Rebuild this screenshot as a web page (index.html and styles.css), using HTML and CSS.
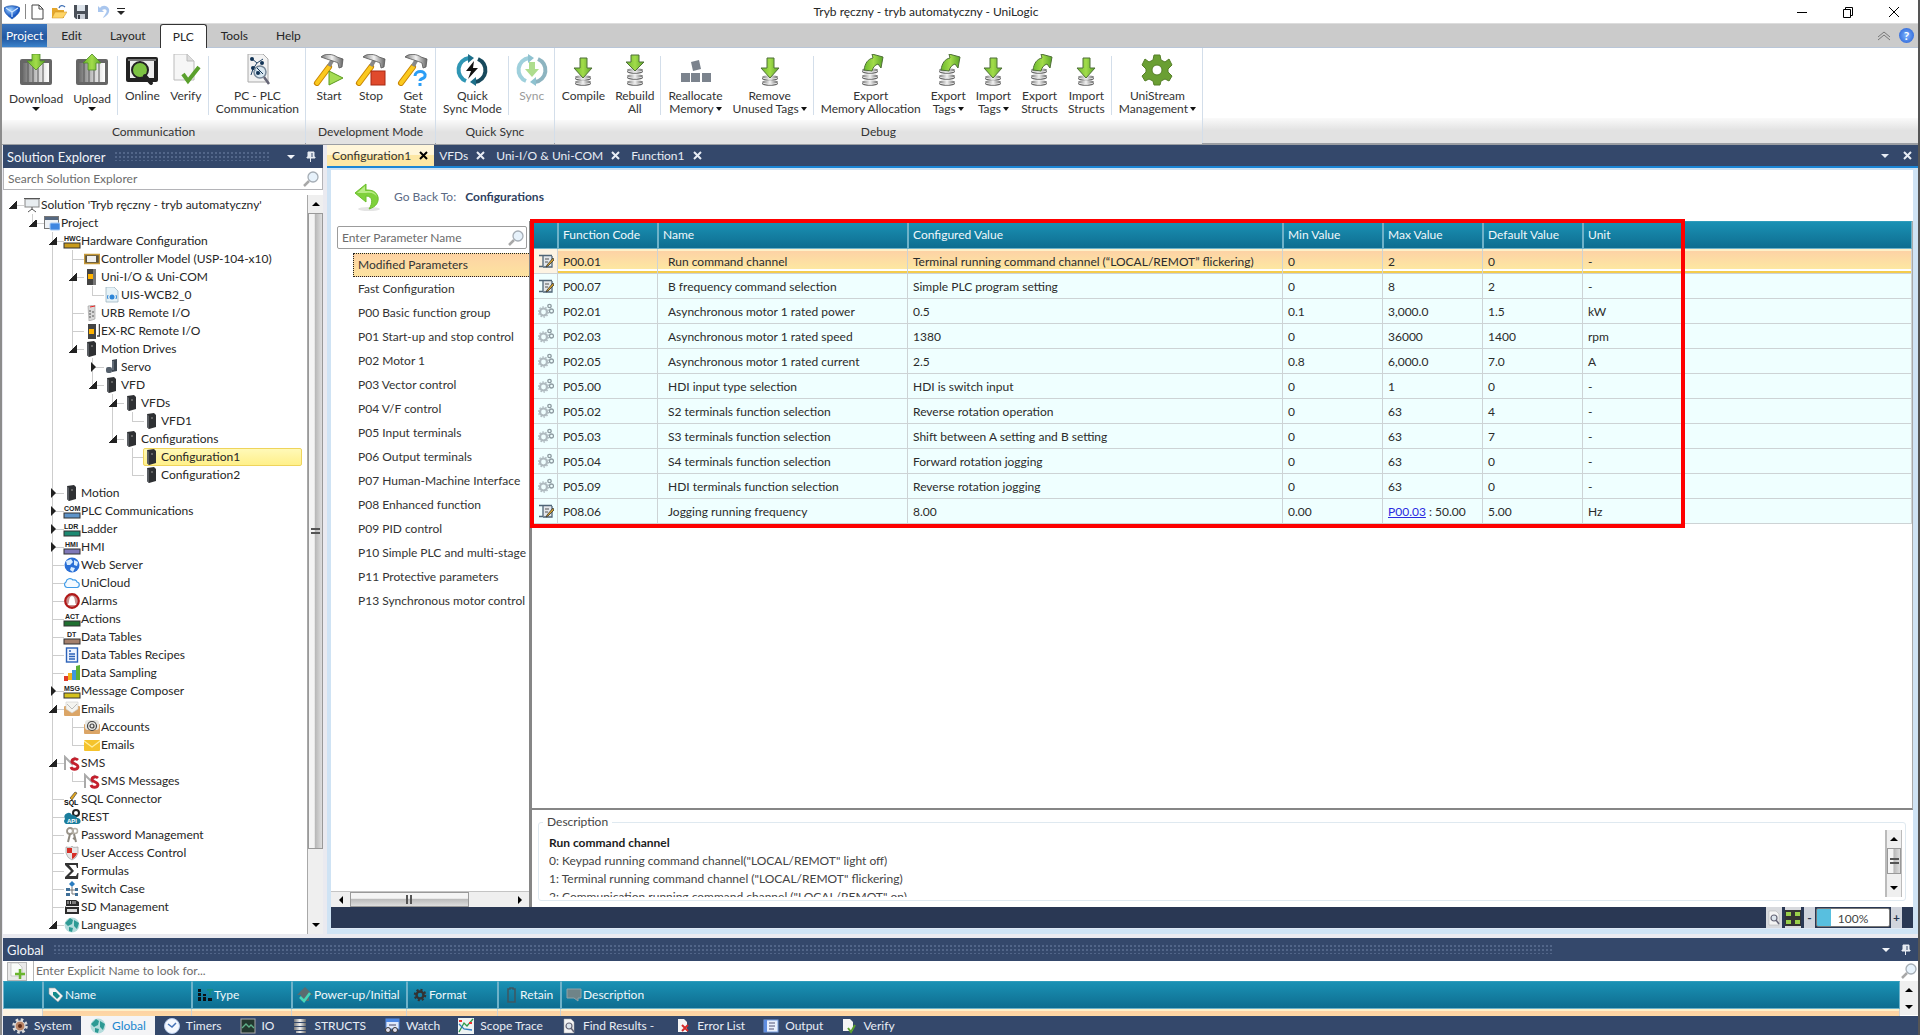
FILE: index.html
```html
<!DOCTYPE html>
<html lang="en">
<head>
<meta charset="utf-8">
<title>Tryb ręczny - tryb automatyczny - UniLogic</title>
<link rel="stylesheet" href="styles.css">
</head>
<body>
<svg class="defs" aria-hidden="true">
<defs>
<linearGradient id="gGreen" x1="0" y1="0" x2="1" y2="0"><stop offset="0" stop-color="#6cb92d"/><stop offset=".5" stop-color="#a2dc4a"/><stop offset="1" stop-color="#5ba628"/></linearGradient>
<linearGradient id="gSteel" x1="0" y1="0" x2="1" y2="0"><stop offset="0" stop-color="#777"/><stop offset=".5" stop-color="#f2f2f2"/><stop offset="1" stop-color="#666"/></linearGradient>
<linearGradient id="gBar" x1="0" y1="0" x2="1" y2="0"><stop offset="0" stop-color="#6d6d6d"/><stop offset=".6" stop-color="#d5d5d5"/><stop offset="1" stop-color="#fff"/></linearGradient>
<radialGradient id="gBlue" cx=".4" cy=".3"><stop offset="0" stop-color="#9cd0ff"/><stop offset="1" stop-color="#1756c4"/></radialGradient>
</defs>
<symbol id="logo" viewBox="0 0 16 16"><path d="M0 4C4 1 12 1 16 4C16 9 12 12 8 15C4 12 0 9 0 4Z" fill="url(#gBlue)" stroke="#1b55a8" stroke-width=".7"/><path d="M2 4L8 8L14 4M8 8V13" stroke="#cfe6ff" fill="none" stroke-width="1.2"/></symbol>
<symbol id="new" viewBox="0 0 16 16"><path d="M3 1H10L14 5V15H3Z" fill="#fff" stroke="#444"/><path d="M10 1V5H14" fill="none" stroke="#444"/></symbol>
<symbol id="open" viewBox="0 0 16 16"><path d="M1 14V4H6L7 6H13V14Z" fill="#e5a72b"/><path d="M1 14L4 8H16L12 14Z" fill="#ffd566" stroke="#c98d1e" stroke-width=".5"/><path d="M8 4C9 1 12 1 14 3" fill="none" stroke="#3d6fb5" stroke-width="1.3"/></symbol>
<symbol id="save" viewBox="0 0 16 16"><path d="M1 1H15V15H3L1 13Z" fill="#4a5058"/><rect x="4" y="1" width="8" height="6" fill="#dce3ea"/><rect x="4" y="10" width="8" height="5" fill="#c9ced6"/><rect x="5" y="11" width="2" height="4" fill="#3b4048"/></symbol>
<symbol id="undo" viewBox="0 0 16 16"><path d="M3 2V8H9L7 6C10 4 13 6 11 9C10 11 8 13 8 14C12 12 15 9 14 5C12 1 7 1 5 4Z" fill="#a9c6ee"/></symbol>
<symbol id="slots" viewBox="0 0 32 32"><rect x="0" y="5" width="32" height="26" rx="2" fill="#666"/><rect x="3" y="9" width="26" height="19" fill="url(#gBar)"/><path d="M8 9V28M13 9V28M18 9V28M23 9V28" stroke="#555" stroke-width="1"/></symbol>
<symbol id="download" viewBox="0 0 32 32"><use href="#slots"/><path d="M12 0H20V7H25L16 16L7 7H12Z" fill="url(#gGreen)" stroke="#4f8a28" stroke-width=".8"/></symbol>
<symbol id="upload" viewBox="0 0 32 32"><use href="#slots"/><path d="M12 16H20V9H25L16 0L7 9H12Z" fill="url(#gGreen)" stroke="#4f8a28" stroke-width=".8"/></symbol>
<symbol id="online" viewBox="0 0 32 32"><rect x="0" y="3" width="32" height="25" rx="2" fill="#222"/><rect x="4" y="7" width="24" height="17" fill="#eee"/><rect x="2" y="5" width="28" height="2" fill="#777"/><circle cx="14" cy="16" r="8" fill="#7cc242" stroke="#222" stroke-width="2"/><path d="M19 22L25 29" stroke="#222" stroke-width="4" stroke-linecap="round"/></symbol>
<symbol id="verify" viewBox="0 0 32 32"><path d="M4 0H17L24 7V26H4Z" fill="#f6f6f6" stroke="#bbb"/><path d="M17 0V7H24" fill="#ddd" stroke="#bbb"/><path d="M13 20L18 27L29 13" fill="none" stroke="#5aa02c" stroke-width="4"/></symbol>
<symbol id="pcplc" viewBox="0 0 32 32"><path d="M7 0H22L27 5V28H7Z" fill="#f2f2f2" stroke="#aaa"/><path d="M10 4L16 9L22 5M16 9L12 15L20 20M12 15L10 21" stroke="#246" fill="none"/><circle cx="11" cy="5" r="2" fill="#135"/><circle cx="12" cy="14" r="2" fill="#135"/><circle cx="21" cy="9" r="2" fill="#135"/><circle cx="19" cy="18" r="6" fill="#cfe3f0" fill-opacity=".7" stroke="#789" stroke-width="1.5"/><path d="M16 14L22 20" stroke="#135"/><circle cx="17" cy="19" r="2" fill="#135"/><path d="M23 23L28 30" stroke="#667" stroke-width="2.5"/></symbol>
<symbol id="hammer" viewBox="0 0 32 32"><path d="M16 13L4 29" stroke="#c98500" stroke-width="6" stroke-linecap="round"/><path d="M16 13L4 29" stroke="#fbc91e" stroke-width="4" stroke-linecap="round"/><path d="M20 5L16 12" stroke="#888" stroke-width="4"/><path d="M8 3C12 -1 20 0 24 3L30 5L29 13L26 14L25 9C21 7 16 6 8 3Z" fill="url(#gSteel)" stroke="#555" stroke-width=".8"/></symbol>
<symbol id="start" viewBox="0 0 32 32"><use href="#hammer"/><path d="M16 17L30 24L16 31Z" fill="#a5dc54" stroke="#5b9a1d"/></symbol>
<symbol id="stop" viewBox="0 0 32 32"><use href="#hammer"/><rect x="16" y="17" width="14" height="14" fill="#e04a2c" stroke="#a82812"/></symbol>
<symbol id="getstate" viewBox="0 0 32 32"><use href="#hammer"/><path d="M18 22C18 16 29 16 28 22C28 25 23 24 23 27M23 29V32" stroke="#2b9df5" stroke-width="3" fill="none"/></symbol>
<symbol id="qsync" viewBox="0 0 32 32"><path d="M13 4A12 12 0 0 0 10 27" fill="none" stroke="#2f96b4" stroke-width="4"/><path d="M19 28A12 12 0 0 0 22 5" fill="none" stroke="#17495c" stroke-width="4"/><path d="M12 0L18 4L12 9ZM20 32L14 28L20 23Z" fill="#1d6f8a"/><path d="M18 7L10 17H15L12 25L22 14H17Z" fill="#111"/></symbol>
<symbol id="sync" viewBox="0 0 32 32"><path d="M13 4A12 12 0 0 0 10 27" fill="none" stroke="#9fd0dc" stroke-width="4"/><path d="M19 28A12 12 0 0 0 22 5" fill="none" stroke="#8db4c0" stroke-width="4"/><path d="M12 0L18 4L12 9ZM20 32L14 28L20 23Z" fill="#8fc2d0"/><path d="M13 8H19V15H23L16 23L9 15H13Z" fill="#aedd8e"/></symbol>
<symbol id="disk" viewBox="0 0 18 6"><path d="M0 2C0 6 18 6 18 2V3.500C18 7 0 7 0 3.500Z" fill="#666"/><ellipse cx="9" cy="2" rx="9" ry="2" fill="url(#gSteel)"/></symbol>
<symbol id="compile" viewBox="0 0 32 32"><use href="#disk" x="8" y="21" width="16" height="6"/><use href="#disk" x="8" y="26" width="16" height="6"/><path d="M13 4H20V14H25L16 24L7 14H13Z" fill="url(#gGreen)" stroke="#4f6f38"/></symbol>
<symbol id="rebuild" viewBox="0 0 32 32"><use href="#disk" x="8" y="14" width="16" height="6"/><use href="#disk" x="8" y="20" width="16" height="6"/><use href="#disk" x="8" y="26" width="16" height="6"/><path d="M12 1H20V8H25L16 17L7 8H12Z" fill="url(#gGreen)" stroke="#4f6f38"/></symbol>
<symbol id="export" viewBox="0 0 32 32"><use href="#disk" x="7" y="14" width="16" height="6"/><use href="#disk" x="7" y="20" width="16" height="6"/><use href="#disk" x="7" y="26" width="16" height="6"/><path d="M9 16C10 9 13 5 18 4L17 0L28 3L26 14L23 10C20 11 18 13 17 17Z" fill="url(#gGreen)" stroke="#4f6f38"/></symbol>
<symbol id="blocks" viewBox="0 0 32 32"><path d="M11 8L19 6L21 15L13 17ZM1 19H10V28H1ZM11 19H20V28H11ZM22 19H31V28H22Z" fill="#7b838d"/></symbol>
<symbol id="cog" viewBox="0 0 32 32"><path fill-rule="evenodd" d="M13 1H19L20 6L24 8L28 5L31 11L27 15V18L31 22L28 27L24 25L20 27L19 31H13L12 27L8 25L4 27L1 22L5 18V15L1 11L4 5L8 8L12 6ZM16 11A5 5 0 1 0 16 21A5 5 0 1 0 16 11Z" fill="#6a9f33" stroke="#557f28"/></symbol>
<symbol id="mag" viewBox="0 0 16 16"><path d="M6 10L1 15" stroke="#a8a8a8" stroke-width="2.500"/><circle cx="10" cy="6" r="5" fill="#e7f2fb" stroke="#a5adb5" stroke-width="1.300"/></symbol>
<symbol id="pin" viewBox="0 0 12 12"><path d="M3 1H9V6H10V7H2V6H3ZM5.500 7V11" fill="#e6ebf2" stroke="#e6ebf2"/><path d="M7 2V6" stroke="#34486b"/></symbol>
<symbol id="screen" viewBox="0 0 16 16"><rect x="1" y="2" width="14" height="8" fill="#e8edf0" stroke="#888"/><path d="M0 1.500H16M8 10V13M4 15L8 12L12 15" stroke="#555" fill="none"/></symbol>
<symbol id="win" viewBox="0 0 16 16"><rect x=".5" y="1.500" width="14" height="12" fill="#eef2f6" stroke="#777"/><rect x="1" y="2" width="13" height="3" fill="#556880"/><rect x="6" y="8" width="10" height="7" rx="1" fill="#3f86e0" stroke="#a9cbf5"/></symbol>
<symbol id="ctrl" viewBox="0 0 16 16"><rect x=".5" y="3.500" width="15" height="9" fill="#5b5340" stroke="#c79a3a" stroke-width="1.500"/><rect x="3" y="5" width="9" height="6" fill="#efefef"/></symbol>
<symbol id="mod" viewBox="0 0 16 16"><path d="M3 0H12V16H3Z" fill="#444"/><path d="M9 0H12V16H9Z" fill="#777"/><rect x="4" y="5" width="5" height="5" fill="#ffb300"/></symbol>
<symbol id="modx" viewBox="0 0 16 16"><path d="M4 1H12V16H4Z" fill="#444"/><rect x="5" y="6" width="5" height="5" fill="#ffb300"/><path d="M15.500 1V13H13" fill="none" stroke="#444" stroke-width="1.500"/></symbol>
<symbol id="doc" viewBox="0 0 16 16"><path d="M2 0H10L14 4V15H2Z" fill="#e6f2f7" stroke="#9fb5c0" stroke-width=".8"/><path d="M4 8Q3 10 4 12M12 8Q13 10 12 12" fill="none" stroke="#2e86d8"/><circle cx="8" cy="10" r="2.500" fill="#2e86d8"/></symbol>
<symbol id="urb" viewBox="0 0 16 16"><path d="M4 1L11 0V14L5 16Z" fill="#d9d9d9" stroke="#999" stroke-width=".6"/><path d="M6 2L11 1" stroke="#e22"/><path d="M6 5V14M9 6V8M9 10V13" stroke="#555" stroke-dasharray="2 1"/></symbol>
<symbol id="vfd" viewBox="0 0 16 16"><path d="M3 1L10 0L12 2V14L5 16L3 14Z" fill="#2e3033"/><path d="M3 1L5 3V16L3 14Z" fill="#5a5e63"/><circle cx="8" cy="5" r="1" fill="#777"/></symbol>
<symbol id="servo" viewBox="0 0 16 16"><path d="M8 1L13 0V12L8 13Z" fill="#3c4550"/><rect x="2" y="8" width="6" height="6" rx="2" fill="#55606c"/><path d="M9 2V11" stroke="#8a95a0"/></symbol>
<symbol id="globe" viewBox="0 0 16 16"><circle cx="8" cy="8" r="7.500" fill="#2a6fd6"/><path d="M2 4L7 2L9 5L6 8L3 8ZM10 3L14 5L13 9L10 8ZM7 10L11 11L9 15L6 13Z" fill="#d8ecff"/></symbol>
<symbol id="cloud" viewBox="0 0 16 16"><path d="M3 12.500A3 3 0 0 1 2 7A4 4 0 0 1 9 5A3 3 0 0 1 13 7A2.800 2.800 0 0 1 13 12.500Z" fill="#f4faff" stroke="#3f9be8" stroke-width="1.200"/></symbol>
<symbol id="alarm" viewBox="0 0 16 16"><circle cx="8" cy="8" r="6.800" fill="#c9908f" stroke="#b01818" stroke-width="2.200"/><path d="M3.500 12C6 10 4 4 8 3C12 4 10 10 12.500 12Z" fill="#fff"/></symbol>
<symbol id="recipe" viewBox="0 0 16 16"><rect x="2.500" y="1" width="11" height="14" fill="#eef4ff" stroke="#2c62b8" stroke-width="1.400"/><path d="M5 4H7M5 7H11M5 9.500H11M5 12H11" stroke="#2c62b8" stroke-width="1.300"/></symbol>
<symbol id="chart" viewBox="0 0 16 16"><path d="M0 11H4V16H0Z" fill="#e03a28"/><path d="M4 8H8V15H4Z" fill="#f5b21c"/><path d="M8 5H12V15H8Z" fill="#3f97dd"/><path d="M12 1L16 0V15H12Z" fill="#5db035"/></symbol>
<symbol id="inbox" viewBox="0 0 16 16"><rect x="0" y="5" width="16" height="10" rx="1" fill="#dba566"/><path d="M2 1H14V8L8 12L2 8Z" fill="#f4f4f0" stroke="#ccc" stroke-width=".6"/><path d="M3 3L8 8L13 3" fill="none" stroke="#bbb"/></symbol>
<symbol id="at" viewBox="0 0 16 16"><rect x="0" y="5" width="16" height="10" rx="1" fill="#dba566"/><rect x="1" y="1" width="14" height="10" rx="3" fill="#e8e8e4"/><circle cx="8" cy="7" r="4.500" fill="none" stroke="#444" stroke-width="1.200"/><circle cx="8" cy="7" r="2" fill="none" stroke="#444" stroke-width="1.200"/></symbol>
<symbol id="mail" viewBox="0 0 16 16"><rect x="0" y="3" width="16" height="11" rx="1" fill="#f5c32c"/><path d="M0 4L8 10L16 4" fill="none" stroke="#fff0a0" stroke-width="1.200"/></symbol>
<symbol id="keys" viewBox="0 0 16 16"><circle cx="6" cy="4" r="3" fill="none" stroke="#9a948a" stroke-width="1.800"/><circle cx="11" cy="4" r="2.500" fill="none" stroke="#b5b0a5" stroke-width="1.500"/><path d="M6 7L4 15M10 7L12 15M9 11L12 13" stroke="#8f8a80" stroke-width="2"/></symbol>
<symbol id="shield" viewBox="0 0 16 16"><path d="M2 2Q8 3 8 1Q8 3 14 2V8Q13 13 8 15Q3 13 2 8Z" fill="#e6e6e6" stroke="#999" stroke-width=".7"/><path d="M3 3H8V8H3ZM8 8H13Q12 12 8 14Z" fill="#d62f26"/></symbol>
<symbol id="sigma" viewBox="0 0 16 16"><path d="M1 0H14V5H13L12 2H5L10 8L5 13H12L13.500 10H14.500L14 16H1V14L7 8L1 2Z" fill="#333"/></symbol>
<symbol id="switch" viewBox="0 0 16 16"><path d="M8 0L11 3L8 6L5 3Z" fill="#2b7cc0"/><path d="M8 6V13M8 9H12M8 13H12M4 9H8" stroke="#777"/><path d="M2 7H6V10H2ZM2 12H6V15H2ZM11 7H14V10H11ZM11 12H14V15H11Z" fill="#3f6f98"/></symbol>
<symbol id="sd" viewBox="0 0 16 16"><path d="M2 1H12L15 3V15H1V8L2 7Z" fill="#2c2c2c"/><path d="M4 2V5M6.500 2V5M9 2V5M11 2V5" stroke="#ccc"/><rect x="3" y="10" width="10" height="3" fill="#ddd"/><path d="M2 7.500H15" stroke="#eee"/></symbol>
<symbol id="globe2" viewBox="0 0 16 16"><circle cx="8" cy="8" r="7.500" fill="#b4dcdc"/><path d="M1 6L6 1L9 3L8 7L4 9ZM10 3L15 6L13 12L10 9ZM5 10L9 11L8 15L5 14Z" fill="#2d9a94"/></symbol>
<symbol id="edit" viewBox="0 0 16 16"><rect x="5" y="3" width="9" height="11" fill="#e3e7ea"/><path d="M1 2.500H14M5 3V13M1 13.500H5M14 3V14H5" fill="none" stroke="#4f6577" stroke-width="1.300"/><path d="M7 6H11M7 9H10" stroke="#555"/><path d="M15 5L9 12L8 14L10 13L16 7Z" fill="#d9a42a" stroke="#333" stroke-width=".8"/></symbol>
<symbol id="gears" viewBox="0 0 16 16"><circle cx="5.500" cy="9" r="3.500" fill="none" stroke="#aebabf" stroke-width="2.200"/><circle cx="5.500" cy="9" r="5" fill="none" stroke="#aebabf" stroke-width="1.300" stroke-dasharray="1.500 1.600"/><circle cx="11.500" cy="3" r="1.700" fill="none" stroke="#8d9ba1" stroke-width="1.300"/><circle cx="13.500" cy="8" r="2" fill="none" stroke="#8d9ba1" stroke-width="1.300"/></symbol>
<symbol id="tag" viewBox="0 0 16 16"><path d="M1 1L7 1L15 9L10 15L1 7Z" fill="#f1f4f4" stroke="#999" stroke-width=".6"/><path d="M5 5L8 5L12 9L9 12L5 8Z" fill="#128a8a"/></symbol>
<symbol id="type" viewBox="0 0 16 16"><path d="M1 2H4V5H1ZM1 6H4V9H1ZM1 10H4V14H1ZM6 7H9V9H6ZM6 10H9V14H6ZM11 11H15V14H11Z" fill="#0b1013"/><path d="M10 2H16V4H14V8H12V4H10Z" fill="#138b86"/></symbol>
<symbol id="power" viewBox="0 0 16 16"><path d="M8 0L16 8H12V14H4V8H0Z" fill="#5b6b6f"/><path d="M3 10L7 14L13 6" fill="none" stroke="#45d6b8" stroke-width="2.500"/></symbol>
<symbol id="gear" viewBox="0 0 16 16"><circle cx="8" cy="8" r="3.500" fill="none" stroke="#333" stroke-width="2.500"/><circle cx="8" cy="8" r="5" fill="none" stroke="#333" stroke-width="2.500" stroke-dasharray="2 1.900"/></symbol>
<symbol id="batt" viewBox="0 0 16 16"><path d="M5 2H7V1H10V2H12V15H5Z" fill="none" stroke="#3c5964" stroke-width="1.600"/></symbol>
<symbol id="note" viewBox="0 0 16 16"><path d="M1 2H15V11H12V14L8 11H1Z" fill="#6f8488" stroke="#8fa3a8"/></symbol>
<symbol id="sys" viewBox="0 0 16 16"><circle cx="8" cy="8" r="6.500" fill="none" stroke="#ddd" stroke-width="2.500" stroke-dasharray="2.600 2.500"/><circle cx="8" cy="8" r="5" fill="#b98465" stroke="#eee"/><circle cx="8" cy="8" r="2" fill="#5a2a18"/></symbol>
<symbol id="clock" viewBox="0 0 16 16"><circle cx="8" cy="8" r="7.500" fill="#f4f8ff" stroke="#b8ccec"/><path d="M4 6L8 9L12 5" fill="none" stroke="#4472b8" stroke-width="1.500"/></symbol>
<symbol id="io" viewBox="0 0 16 16"><rect x="1" y="1" width="14" height="14" fill="#23382f" stroke="#aaa"/><path d="M2 10L6 6L9 9L11 7L14 10" fill="none" stroke="#5fb08a" stroke-width="1.300"/></symbol>
<symbol id="db" viewBox="0 0 16 16"><path d="M2 1H14V4H2ZM2 5H14V8H2ZM2 9H14V12H2ZM4 13H14V15H4Z" fill="url(#gSteel)"/></symbol>
<symbol id="watch" viewBox="0 0 16 16"><rect x="2" y="1" width="13" height="10" fill="#dfe9fa" stroke="#5b8ee0"/><rect x="2" y="1" width="13" height="3" fill="#4c87e4"/><path d="M5 7H12" stroke="#446"/><circle cx="4" cy="12" r="2.500" fill="#dde" stroke="#333"/><circle cx="11" cy="12" r="2.500" fill="#dde" stroke="#333"/></symbol>
<symbol id="scope" viewBox="0 0 16 16"><rect width="16" height="16" fill="#eef3f3"/><path d="M1 14L6 5L9 8L15 1" fill="none" stroke="#2f9a4a" stroke-width="1.300"/><path d="M1 6L6 11L14 12" fill="none" stroke="#2f7bc0" stroke-width="1.300"/><path d="M1 3L4 3M11 5L14 5" stroke="#e33" stroke-width="2"/></symbol>
<symbol id="find" viewBox="0 0 16 16"><path d="M3 1H10L13 4V15H3Z" fill="#f4f4f4" stroke="#aaa" stroke-width=".5"/><circle cx="8" cy="8" r="3" fill="#dde6ee" stroke="#667" stroke-width="1.200"/><path d="M10 10L13 14" stroke="#667" stroke-width="1.600"/></symbol>
<symbol id="err" viewBox="0 0 16 16"><path d="M3 1H9L12 4V14H3Z" fill="#f4f4f4"/><path d="M7 7L13 13M13 7L7 13" stroke="#d42a2a" stroke-width="2"/></symbol>
<symbol id="out" viewBox="0 0 16 16"><rect x="1" y="2" width="14" height="12" fill="#e8effc" stroke="#7ba0e0"/><rect x="1" y="2" width="3" height="12" fill="#5f8de0"/><path d="M6 5H12M6 8H12M6 11H11" stroke="#557"/></symbol>
<symbol id="ver" viewBox="0 0 16 16"><path d="M2 1H9L12 4V13H2Z" fill="#f4f4f4"/><path d="M7 10L10 14L14 7" fill="none" stroke="#5aa02c" stroke-width="2"/></symbol>
<symbol id="fit" viewBox="0 0 16 16"><rect width="16" height="16" fill="#333"/><path d="M1 2H6V6H1ZM10 2H15V6H10ZM1 10H6V14H1ZM10 10H15V14H10Z" fill="#9ad04a"/></symbol>
<symbol id="addpage" viewBox="0 0 16 16"><path d="M2 0H9L13 4V13H2Z" fill="#f8fbf8" stroke="#bbb" stroke-width=".7"/><path d="M11 6V16M6 11H16" stroke="#6ab52f" stroke-width="2.500"/></symbol>
<symbol id="sms" viewBox="0 0 16 16"><path d="M1 15V2L8 9L11 2" fill="none" stroke="#aaa" stroke-width="2"/><path d="M14 5C12 3 7 4 8 7C9 9 14 9 14 12C13 15 8 15 7 12" fill="none" stroke="#c41f2c" stroke-width="2.800"/></symbol>
<symbol id="back" viewBox="0 0 28 28"><ellipse cx="15" cy="26" rx="11" ry="2" fill="#e4e4e4"/><path d="M12 1L1 10L12 19V13C19 13 19 20 15 26C22 24 25 19 24 14C22 8 18 7 12 7Z" fill="#7fd13b" stroke="#6dbf2e"/><path d="M11 3L3 10L12 10C18 9 21 11 23 14C21 8 17 8 11 8Z" fill="#b9ec86"/></symbol>
</svg>

<header class="titlebar">
  <div class="quick">
    <svg class="i16"><use href="#logo"/></svg><i class="bar"></i>
    <button aria-label="New"><svg class="i16"><use href="#new"/></svg></button>
    <button aria-label="Open"><svg class="i16"><use href="#open"/></svg></button>
    <button aria-label="Save"><svg class="i16"><use href="#save"/></svg></button>
    <button aria-label="Undo"><svg class="i16"><use href="#undo"/></svg></button>
    <button class="customize" aria-label="Customize toolbar"><i class="tri down"></i></button>
  </div>
  <h1>Tryb ręczny - tryb automatyczny - UniLogic</h1>
  <div class="winctl">
    <button aria-label="Minimize"><svg width="12" height="12"><path d="M1 6.500H11" stroke="#000"/></svg></button>
    <button aria-label="Restore"><svg width="12" height="12"><path d="M1.500 3.500H8.500V11.500H1.500ZM3.500 3V1.500H10.500V9.500H9" fill="none" stroke="#000"/></svg></button>
    <button aria-label="Close"><svg width="12" height="12"><path d="M1 1L11 11M11 1L1 11" stroke="#000"/></svg></button>
  </div>
</header>

<nav class="menu">
  <button class="file">Project</button><button>Edit</button><button>Layout</button><button class="on">PLC</button><button>Tools</button><button>Help</button>
  <span class="grow"></span>
  <button class="mini" aria-label="Collapse ribbon"><svg width="14" height="10"><path d="M1 6L7 1L13 6M1 9L7 4L13 9" fill="none" stroke="#777"/></svg></button>
  <button class="help" aria-label="Help topics">?</button>
</nav>

<section class="ribbon">
  <div class="group"><div class="tools">
    <button class="drop"><svg><use href="#download"/></svg>Download<i class="tri down"></i></button>
    <button class="drop"><svg><use href="#upload"/></svg>Upload<i class="tri down"></i></button><hr>
    <button><svg><use href="#online"/></svg>Online</button>
    <button><svg><use href="#verify"/></svg>Verify</button><hr>
    <button><svg><use href="#pcplc"/></svg>PC - PLC<br>Communication</button>
  </div><h2>Communication</h2></div>
  <div class="group"><div class="tools">
    <button><svg><use href="#start"/></svg>Start</button>
    <button><svg><use href="#stop"/></svg>Stop</button>
    <button><svg><use href="#getstate"/></svg>Get<br>State</button>
  </div><h2>Development Mode</h2></div>
  <div class="group"><div class="tools">
    <button><svg><use href="#qsync"/></svg>Quick<br>Sync Mode</button><hr>
    <button disabled><svg><use href="#sync"/></svg>Sync</button>
  </div><h2>Quick Sync</h2></div>
  <div class="group"><div class="tools">
    <button><svg><use href="#compile"/></svg>Compile</button>
    <button><svg><use href="#rebuild"/></svg>Rebuild<br>All</button><hr>
    <button><svg><use href="#blocks"/></svg>Reallocate<br><span>Memory<i class="tri down"></i></span></button>
    <button><svg><use href="#compile"/></svg>Remove<br><span>Unused Tags<i class="tri down"></i></span></button><hr>
    <button><svg><use href="#export"/></svg>Export<br>Memory Allocation</button>
    <button><svg><use href="#export"/></svg>Export<br><span>Tags<i class="tri down"></i></span></button>
    <button><svg><use href="#compile"/></svg>Import<br><span>Tags<i class="tri down"></i></span></button>
    <button><svg><use href="#export"/></svg>Export<br>Structs</button>
    <button><svg><use href="#compile"/></svg>Import<br>Structs</button><hr>
    <button><svg><use href="#cog"/></svg>UniStream<br><span>Management<i class="tri down"></i></span></button>
  </div><h2>Debug</h2></div>
  <div class="group rest"><div class="tools"></div><h2></h2></div>
</section>

<main class="work">
  <aside class="explorer">
    <header class="panel-head"><h2>Solution Explorer</h2><span class="dots"></span><i class="tri down"></i><svg class="i12"><use href="#pin"/></svg></header>
    <label class="search"><input type="text" placeholder="Search Solution Explorer" aria-label="Search Solution Explorer"><svg class="i16"><use href="#mag"/></svg></label>
    <div class="tree-wrap">
      <ul class="tree">
        <li><div class="row"><button class="exp open"></button><svg><use href="#screen"/></svg><a href="#">Solution 'Tryb ręczny - tryb automatyczny'</a></div>
        <ul><li><div class="row"><button class="exp open"></button><svg><use href="#win"/></svg><a href="#">Project</a></div>
          <ul>
          <li><div class="row"><button class="exp open"></button><svg class="lab"><text y="8">HWC</text><rect y="10" width="16" height="5" fill="#c79a1c"/></svg><a href="#">Hardware Configuration</a></div>
            <ul>
            <li><div class="row leaf"><svg><use href="#ctrl"/></svg><a href="#">Controller Model (USP-104-x10)</a></div></li>
            <li><div class="row"><button class="exp open"></button><svg><use href="#mod"/></svg><a href="#">Uni-I/O &amp; Uni-COM</a></div>
              <ul><li><div class="row leaf"><svg><use href="#doc"/></svg><a href="#">UIS-WCB2_0</a></div></li></ul></li>
            <li><div class="row leaf"><svg><use href="#urb"/></svg><a href="#">URB Remote I/O</a></div></li>
            <li><div class="row leaf"><svg><use href="#modx"/></svg><a href="#">EX-RC Remote I/O</a></div></li>
            <li><div class="row"><button class="exp open"></button><svg><use href="#vfd"/></svg><a href="#">Motion Drives</a></div>
              <ul>
              <li><div class="row"><button class="exp"></button><svg><use href="#servo"/></svg><a href="#">Servo</a></div></li>
              <li><div class="row"><button class="exp open"></button><svg><use href="#vfd"/></svg><a href="#">VFD</a></div>
                <ul>
                <li><div class="row"><button class="exp open"></button><svg><use href="#vfd"/></svg><a href="#">VFDs</a></div>
                  <ul><li><div class="row leaf"><svg><use href="#vfd"/></svg><a href="#">VFD1</a></div></li></ul></li>
                <li><div class="row"><button class="exp open"></button><svg><use href="#vfd"/></svg><a href="#">Configurations</a></div>
                  <ul><li><div class="row leaf sel"><span><svg><use href="#vfd"/></svg><a href="#">Configuration1</a></span></div></li>
                  <li><div class="row leaf"><svg><use href="#vfd"/></svg><a href="#">Configuration2</a></div></li></ul></li>
                </ul></li>
              </ul></li>
            </ul></li>
          <li><div class="row"><button class="exp"></button><svg><use href="#vfd"/></svg><a href="#">Motion</a></div></li>
          <li><div class="row"><button class="exp"></button><svg class="lab"><text y="8">COM</text><rect y="10" width="16" height="5" fill="#5e93c8"/></svg><a href="#">PLC Communications</a></div></li>
          <li><div class="row"><button class="exp"></button><svg class="lab"><text y="8">LDR</text><rect y="10" width="16" height="5" fill="#1d8a72"/></svg><a href="#">Ladder</a></div></li>
          <li><div class="row"><button class="exp"></button><svg class="lab"><text x="1" y="8">HMI</text><rect y="10" width="16" height="5" fill="#7f78b8"/></svg><a href="#">HMI</a></div></li>
          <li><div class="row leaf"><svg><use href="#globe"/></svg><a href="#">Web Server</a></div></li>
          <li><div class="row leaf"><svg><use href="#cloud"/></svg><a href="#">UniCloud</a></div></li>
          <li><div class="row leaf"><svg><use href="#alarm"/></svg><a href="#">Alarms</a></div></li>
          <li><div class="row leaf"><svg class="lab"><text x="1" y="8">ACT</text><rect y="10" width="16" height="5" fill="#1f7030"/></svg><a href="#">Actions</a></div></li>
          <li><div class="row leaf"><svg class="lab"><text x="3" y="8">DT</text><rect y="10" width="16" height="5" fill="#a5806c"/></svg><a href="#">Data Tables</a></div></li>
          <li><div class="row leaf"><svg><use href="#recipe"/></svg><a href="#">Data Tables Recipes</a></div></li>
          <li><div class="row leaf"><svg><use href="#chart"/></svg><a href="#">Data Sampling</a></div></li>
          <li><div class="row"><button class="exp"></button><svg class="lab"><text y="8">MSG</text><rect y="10" width="16" height="5" fill="#d3c01c"/></svg><a href="#">Message Composer</a></div></li>
          <li><div class="row"><button class="exp open"></button><svg><use href="#inbox"/></svg><a href="#">Emails</a></div>
            <ul><li><div class="row leaf"><svg><use href="#at"/></svg><a href="#">Accounts</a></div></li>
            <li><div class="row leaf"><svg><use href="#mail"/></svg><a href="#">Emails</a></div></li></ul></li>
          <li><div class="row"><button class="exp open"></button><svg><use href="#sms"/></svg><a href="#">SMS</a></div>
            <ul><li><div class="row leaf"><svg><use href="#sms"/></svg><a href="#">SMS Messages</a></div></li></ul></li>
          <li><div class="row leaf"><svg class="lab"><path d="M6 7L11 1L13 2L8 9Z" fill="#e0a520" stroke="#333" stroke-width=".6"/><text y="14" class="heavy">SQL</text></svg><a href="#">SQL Connector</a></div></li>
          <li><div class="row leaf"><svg class="lab"><circle cx="12" cy="4" r="3" fill="none" stroke="#222" stroke-width="2"/><path d="M2 15A3 3 0 0 1 1 10A4 4 0 0 1 8 6Q12 6 13 9A3 3 0 0 1 14 15Z" fill="#1b7d9c"/><text x="3" y="14" class="api">API</text></svg><a href="#">REST</a></div></li>
          <li><div class="row leaf"><svg><use href="#keys"/></svg><a href="#">Password Management</a></div></li>
          <li><div class="row leaf"><svg><use href="#shield"/></svg><a href="#">User Access Control</a></div></li>
          <li><div class="row leaf"><svg><use href="#sigma"/></svg><a href="#">Formulas</a></div></li>
          <li><div class="row leaf"><svg><use href="#switch"/></svg><a href="#">Switch Case</a></div></li>
          <li><div class="row leaf"><svg><use href="#sd"/></svg><a href="#">SD Management</a></div></li>
          <li><div class="row"><button class="exp open"></button><svg><use href="#globe2"/></svg><a href="#">Languages</a></div></li>
          </ul></li></ul></li>
      </ul>
      <div class="vscroll"><button aria-label="Scroll up"><i class="tri up"></i></button><div class="thumb tall"><i class="grip"></i></div><span class="grow"></span><button aria-label="Scroll down"><i class="tri down"></i></button></div>
    </div>
  </aside>

  <section class="editor">
    <nav class="tabs">
      <button class="on">Configuration1 <svg class="x"><path d="M1 1L8 8M8 1L1 8"/></svg></button>
      <button>VFDs <svg class="x"><path d="M1 1L8 8M8 1L1 8"/></svg></button>
      <button>Uni-I/O &amp; Uni-COM <svg class="x"><path d="M1 1L8 8M8 1L1 8"/></svg></button>
      <button>Function1 <svg class="x"><path d="M1 1L8 8M8 1L1 8"/></svg></button>
      <span class="grow"></span>
      <i class="tri down"></i><button class="shut" aria-label="Close tab"><svg class="x"><path d="M1 1L8 8M8 1L1 8"/></svg></button>
    </nav>
    <div class="frame">
      <div class="goback"><svg><use href="#back"/></svg><span>Go Back To:</span><a href="#">Configurations</a></div>
      <div class="split">
        <div class="params">
          <label class="psearch"><input type="text" placeholder="Enter Parameter Name" aria-label="Enter Parameter Name"><svg class="i16"><use href="#mag"/></svg></label>
          <ul class="plist">
            <li><button class="on">Modified Parameters</button></li>
            <li><button>Fast Configuration</button></li>
            <li><button>P00 Basic function group</button></li>
            <li><button>P01 Start-up and stop control</button></li>
            <li><button>P02 Motor 1</button></li>
            <li><button>P03 Vector control</button></li>
            <li><button>P04 V/F control</button></li>
            <li><button>P05 Input terminals</button></li>
            <li><button>P06 Output terminals</button></li>
            <li><button>P07 Human-Machine Interface</button></li>
            <li><button>P08 Enhanced function</button></li>
            <li><button>P09 PID control</button></li>
            <li><button>P10 Simple PLC and multi-stage</button></li>
            <li><button>P11 Protective parameters</button></li>
            <li><button>P13 Synchronous motor control</button></li>
          </ul>
          <div class="hscroll"><button aria-label="Scroll left"><i class="tri left"></i></button><div class="thumb"><i class="grip"></i></div><span class="grow"></span><button aria-label="Scroll right"><i class="tri right"></i></button></div>
        </div>
        <div class="detail">
          <div class="grid-area">
            <table class="grid">
              <colgroup><col class="c-icon"><col class="c-100"><col class="c-name"><col class="c-value"><col class="c-100"><col class="c-100"><col class="c-100"><col class="c-100"><col></colgroup>
              <thead><tr><th></th><th>Function Code</th><th>Name</th><th>Configured Value</th><th>Min Value</th><th>Max Value</th><th>Default Value</th><th>Unit</th><th></th></tr></thead>
              <tbody>
              <tr class="on"><td><svg><use href="#edit"/></svg></td><td>P00.01</td><td>Run command channel</td><td>Terminal running command channel (“LOCAL/REMOT” flickering)</td><td>0</td><td>2</td><td>0</td><td>-</td><td></td></tr>
              <tr><td><svg><use href="#edit"/></svg></td><td>P00.07</td><td>B frequency command selection</td><td>Simple PLC program setting</td><td>0</td><td>8</td><td>2</td><td>-</td><td></td></tr>
              <tr><td><svg><use href="#gears"/></svg></td><td>P02.01</td><td>Asynchronous motor 1 rated power</td><td>0.5</td><td>0.1</td><td>3,000.0</td><td>1.5</td><td>kW</td><td></td></tr>
              <tr><td><svg><use href="#gears"/></svg></td><td>P02.03</td><td>Asynchronous motor 1 rated speed</td><td>1380</td><td>0</td><td>36000</td><td>1400</td><td>rpm</td><td></td></tr>
              <tr><td><svg><use href="#gears"/></svg></td><td>P02.05</td><td>Asynchronous motor 1 rated current</td><td>2.5</td><td>0.8</td><td>6,000.0</td><td>7.0</td><td>A</td><td></td></tr>
              <tr><td><svg><use href="#gears"/></svg></td><td>P05.00</td><td>HDI input type selection</td><td>HDI is switch input</td><td>0</td><td>1</td><td>0</td><td>-</td><td></td></tr>
              <tr><td><svg><use href="#gears"/></svg></td><td>P05.02</td><td>S2 terminals function selection</td><td>Reverse rotation operation</td><td>0</td><td>63</td><td>4</td><td>-</td><td></td></tr>
              <tr><td><svg><use href="#gears"/></svg></td><td>P05.03</td><td>S3 terminals function selection</td><td>Shift between A setting and B setting</td><td>0</td><td>63</td><td>7</td><td>-</td><td></td></tr>
              <tr><td><svg><use href="#gears"/></svg></td><td>P05.04</td><td>S4 terminals function selection</td><td>Forward rotation jogging</td><td>0</td><td>63</td><td>0</td><td>-</td><td></td></tr>
              <tr><td><svg><use href="#gears"/></svg></td><td>P05.09</td><td>HDI terminals function selection</td><td>Reverse rotation jogging</td><td>0</td><td>63</td><td>0</td><td>-</td><td></td></tr>
              <tr><td><svg><use href="#edit"/></svg></td><td>P08.06</td><td>Jogging running frequency</td><td>8.00</td><td>0.00</td><td><a href="#">P00.03</a> : 50.00</td><td>5.00</td><td>Hz</td><td></td></tr>
              </tbody>
            </table>
            <div class="callout"></div>
          </div>
          <fieldset class="desc">
            <legend>Description</legend>
            <div class="desc-body">
              <div class="desc-text"><b>Run command channel</b><p>0: Keypad running command channel("LOCAL/REMOT" light off)</p><p>1: Terminal running command channel ("LOCAL/REMOT" flickering)</p><p>2: Communication running command channel ("LOCAL/REMOT" on)</p></div>
              <div class="vscroll"><button aria-label="Scroll up"><i class="tri up"></i></button><div class="thumb short"><i class="grip"></i></div><span class="grow"></span><button aria-label="Scroll down"><i class="tri down"></i></button></div>
            </div>
          </fieldset>
        </div>
      </div>
      <footer class="zoombar">
        <button class="sq" aria-label="Zoom to selection"><svg class="i16"><use href="#find"/></svg></button>
        <button class="sq" aria-label="Fit"><svg class="i16"><use href="#fit"/></svg></button>
        <button class="step">-</button><output class="zoom">100%</output><button class="step">+</button>
      </footer>
    </div>
  </section>
</main>

<section class="global">
  <header class="panel-head"><h2>Global</h2><span class="dots wide"></span><i class="tri down"></i><svg class="i12"><use href="#pin"/></svg></header>
  <div class="gsearch"><button class="add" aria-label="Add tag"><svg class="i16"><use href="#addpage"/></svg></button><input type="text" placeholder="Enter Explicit Name to look for..." aria-label="Enter Explicit Name to look for"><svg class="i16"><use href="#mag"/></svg></div>
  <div class="gtable">
    <table class="grid">
      <colgroup><col class="g-mark"><col class="g-name"><col class="c-100"><col class="g-power"><col class="g-format"><col class="g-retain"><col></colgroup>
      <thead><tr><th></th><th><span><svg class="i16"><use href="#tag"/></svg>Name</span></th><th><span><svg class="i16"><use href="#type"/></svg>Type</span></th><th><span><svg class="i16"><use href="#power"/></svg>Power-up/Initial</span></th><th><span><svg class="i16"><use href="#gear"/></svg>Format</span></th><th><span><svg class="i16"><use href="#batt"/></svg>Retain</span></th><th><span><svg class="i16"><use href="#note"/></svg>Description</span></th></tr></thead>
      <tbody><tr class="on"><td></td><td></td><td></td><td></td><td></td><td></td><td></td></tr></tbody>
    </table>
    <div class="vscroll"><button aria-label="Scroll up"><i class="tri up"></i></button><button aria-label="Scroll down"><i class="tri down"></i></button></div>
  </div>
</section>

<nav class="docks">
  <button><svg class="i16"><use href="#sys"/></svg>System</button>
  <button class="on"><svg class="i16"><use href="#globe2"/></svg>Global</button>
  <button><svg class="i16"><use href="#clock"/></svg>Timers</button>
  <button><svg class="i16"><use href="#io"/></svg>IO</button>
  <button><svg class="i16"><use href="#db"/></svg>STRUCTS</button>
  <button><svg class="i16"><use href="#watch"/></svg>Watch</button>
  <button><svg class="i16"><use href="#scope"/></svg>Scope Trace</button>
  <button><svg class="i16"><use href="#find"/></svg>Find Results -&nbsp;</button>
  <button><svg class="i16"><use href="#err"/></svg>Error List</button>
  <button><svg class="i16"><use href="#out"/></svg>Output</button>
  <button><svg class="i16"><use href="#ver"/></svg>Verify</button>
</nav>
</body>
</html>
```
FILE: styles.css
```css
* { box-sizing: border-box; }
body {
  margin: 0;
  height: 100vh;
  min-height: 600px;
  display: flex;
  flex-direction: column;
  overflow: hidden;
  background: #eaeaf0;
  border-left: 2px solid #8c8c8c;
  border-right: 2px solid #555;
  font: 12px/16px Lato, "Liberation Sans", sans-serif;
  color: #262626;
}
.defs { position: absolute; width: 0; height: 0; }
button, input { font: inherit; color: inherit; border: 0; padding: 0; margin: 0; background: none; }
h1, h2, p, ul, hr { margin: 0; padding: 0; font: inherit; border: 0; }
ul { list-style: none; }
a { color: inherit; text-decoration: none; }
input { outline: 0; min-width: 0; flex: 1; }
input::placeholder { color: #6c6c6c; opacity: 1; }
svg { display: block; flex: none; }
.i16 { width: 16px; height: 16px; }
.i12 { width: 12px; height: 12px; }
.grow { flex: 1; }

.tri { display: inline-block; flex: none; border: 4px solid transparent; width: 0; height: 0; }
.tri.down { border-top-color: currentColor; border-bottom: 0; }
.tri.up { border-bottom-color: currentColor; border-top: 0; }
.tri.left { border-right-color: currentColor; border-left: 0; }
.tri.right { border-left-color: currentColor; border-right: 0; }

/* title bar */
.titlebar { display: flex; align-items: center; height: 23px; background: #fff; flex: none; }
.quick { width: 130px; display: flex; align-items: center; padding-left: 2px; gap: 6px; }
.quick .bar { width: 1px; height: 15px; background: #888; margin-right: -3px; margin-left: -1px; }
.quick .customize { display: flex; border-top: 1px solid #222; padding-top: 2px; }
.titlebar h1 { flex: 1; text-align: center; }
.winctl { width: 198px; display: flex; justify-content: flex-end; gap: 34px; padding-right: 18px; }

/* menu strip */
.menu { display: flex; align-items: stretch; height: 25px; background: #cbcbcb; border-top: 1px solid #ddd; border-bottom: 1px solid #b9c6d8; flex: none; }
.menu button { padding: 0 14px; }
.menu .file { background: linear-gradient(#3a75bd, #2156a0 60%, #3b83cb); color: #fff; padding: 0 4px; }
.menu .on { padding: 0 12px; background: #fff; border: 1px solid #333; border-bottom: 0; border-radius: 3px 3px 0 0; margin-bottom: -1px; }
.menu .mini { padding: 0 8px; }
.menu .help { align-self: center; width: 15px; height: 15px; padding: 0; margin-right: 4px; border-radius: 50%; background: radial-gradient(#7db4ff, #1f57d0); color: #fff; font-weight: 700; line-height: 15px; }

/* ribbon */
.ribbon { display: flex; flex: none; height: 97px; background: #fff; border-bottom: 2px solid #9b9ea3; }
.group { display: flex; flex-direction: column; border-right: 1px solid #d3deea; }
.group.rest { flex: 1; border-right: 0; }
.tools { display: flex; flex: 1; padding: 6px 1px 5px 2px; }
.tools button { min-width: 42px; padding: 0 5px; display: block; align-self: flex-start; line-height: 13px; text-align: center; color: #333; }
.tools button > svg { width: 32px; height: 32px; margin: 0 auto 3px; }
.tools .drop > svg { margin-bottom: 6px; }
.tools .drop .tri { display: block; margin: 2px auto 0; color: #111; }
.tools span .tri { border-width: 3px; border-top-width: 4px; margin-left: 2px; vertical-align: 2px; color: #111; }
.tools button:disabled { color: #9a9a9a; }
.tools hr { width: 1px; margin: 2px 2px 0 1px; background: #d3deea; }
.group h2 { height: 25px; line-height: 24px; text-align: center; color: #333; background: linear-gradient(#fafafa, #e2e2e2 50%, #e2e2e2); }

/* workspace */
.work { flex: 1; min-height: 0; display: flex; gap: 4px; }
.panel-head { display: flex; align-items: center; gap: 10px; height: 23px; padding: 0 6px 0 4px; background: #34486b; color: #f2f5fa; font-size: 13px; flex: none; }
.dots { flex: 1; height: 9px; margin-right: 7px; background: radial-gradient(circle at 1px 1px, #526689 1px, transparent 1px) 0 0 / 4px 4px; }
.dots.wide { margin-right: 318px; }
.explorer { width: 320px; margin-left: 1px; display: flex; flex-direction: column; background: #fff; }
.search { display: flex; align-items: center; height: 22px; padding: 1px 3px 0 4px; border: 1px solid #b4b4b8; border-top: 0; flex: none; }
.tree-wrap { flex: 1; min-height: 0; display: flex; padding-top: 5px; }
.tree { flex: 1; min-width: 0; overflow: hidden; padding: 1px 5px 0 1px; border-right: 1px solid #a8a8a8; }
.tree li ul { margin-left: 20px; }
.tree li li { background: linear-gradient(#cdcdcd, #cdcdcd) 8px 0 / 1px 100% no-repeat; }
.tree li li:last-child { background-size: 1px 9px; }
.row { display: flex; align-items: center; height: 18px; padding-left: 5px; white-space: nowrap; background: linear-gradient(#cdcdcd, #cdcdcd) 8px 9px / 12px 1px no-repeat; color: #262626; }
.row svg { width: 16px; height: 16px; margin-right: 1px; }
.row.leaf { padding-left: 20px; }
.exp { width: 15px; height: 16px; display: flex; align-items: center; flex: none; }
.exp::before { content: ""; border: 5px solid transparent; border-left-color: #222; border-right: 0; margin-left: 2px; }
.exp.open::before { border: 0; width: 8px; height: 8px; margin: 0; background: linear-gradient(135deg, transparent 50%, #222 50%); }
.row.sel { padding-left: 19px; }
.row.sel span { flex: 1; display: flex; align-items: center; height: 18px; border: 1px solid #efd45c; border-radius: 2px; background: linear-gradient(#fff9b8, #fff08a); }
.row .lab { overflow: visible; }
.lab text { font: 700 7px "Liberation Sans", sans-serif; fill: #222; }
.lab rect { stroke: #333; stroke-width: 1; }
.lab .heavy { fill: #000; }
.lab .api { font-size: 6px; fill: #fff; }

/* scroll bars */
.vscroll { width: 15px; flex: none; display: flex; flex-direction: column; background: #efefef; color: #000; }
.vscroll button { height: 18px; display: flex; align-items: center; justify-content: center; flex: none; }
.vscroll .thumb { display: flex; align-items: center; justify-content: center; border: 1px solid #999; background: linear-gradient(90deg, #f4f4f4 40%, #b9b9b9 50%, #dedede); }
.vscroll .tall { height: 86%; }
.vscroll .short { height: 26px; }
.vscroll .grip { width: 9px; height: 6px; border: solid #555; border-width: 2px 0; }
.hscroll { height: 16px; margin-top: auto; display: flex; background: #efefef; color: #000; border-top: 1px solid #c4c4c4; flex: none; }
.hscroll button { width: 19px; display: flex; align-items: center; justify-content: center; }
.hscroll .thumb { width: 60%; display: flex; align-items: center; justify-content: center; border: 1px solid #999; background: linear-gradient(#f4f4f4 40%, #bcbcbc 50%, #dedede); }
.hscroll .grip { width: 6px; height: 9px; border: solid #555; border-width: 0 2px; }

/* document area */
.editor { flex: 1; min-width: 0; display: flex; flex-direction: column; }
.tabs { display: flex; align-items: stretch; height: 23px; background: #34486b; border-bottom: 2px solid #1b86d6; flex: none; color: #e8edf5; padding-right: 6px; }
.tabs button { display: flex; align-items: center; gap: 8px; padding: 0 6px 0 5px; }
.tabs .on { background: linear-gradient(#fff6da 45%, #fde7a4 50%); color: #333; }
.tabs > .tri { align-self: center; }
.tabs .shut { padding: 0 0 0 14px; }
.x { width: 9px; height: 9px; stroke: currentColor; stroke-width: 2; }
.tabs .on .x { color: #000; }
.frame { flex: 1; min-height: 0; display: flex; flex-direction: column; border: solid #cfe3f4; border-width: 2px 5px 5px 4px; background: #fff; }
.goback { height: 51px; display: flex; align-items: center; padding: 2px 0 0 23px; color: #5b6a85; flex: none; }
.goback svg { width: 28px; height: 28px; margin-right: 12px; }
.goback a { margin-left: 9px; font-weight: 700; color: #2e3f60; }
.split { flex: 1; min-height: 0; display: flex; }
.params { width: 198px; display: flex; flex-direction: column; padding-top: 5px; overflow: hidden; flex: none; }
.psearch { display: flex; align-items: center; height: 23px; margin: 0 2px 0 6px; padding: 1px 2px 0 4px; border: 1px solid #9c9c9c; border-radius: 2px; flex: none; }
.plist { padding: 4px 0 0 22px; }
.plist button { display: block; width: 100%; height: 24px; padding-left: 4px; border: 1px solid transparent; border-right: 0; text-align: left; white-space: nowrap; color: #333; }
.plist .on { background: linear-gradient(#fdd3a4, #fde3a0); border: 1px dotted #222; border-right: 0; }
.detail { flex: 1; min-width: 0; display: flex; flex-direction: column; border-left: 3px solid #868686; }
.grid-area { position: relative; flex: 1; border-bottom: 2px solid #868686; border-right: 1px solid #aaa; }
.callout { position: absolute; left: -2px; top: -2px; width: 1155px; height: 309px; border: 4px solid #fe0000; }

.grid { width: 100%; table-layout: fixed; border-collapse: separate; border-spacing: 0; }
.grid th { height: 28px; padding: 0 4px; text-align: left; font-weight: 400; color: #f0f8fb; background: linear-gradient(#1a91b4, #0e6d90); border: 1px solid #6fb2c9; border-top-color: #2f9cbb; }
.grid td { height: 25px; padding: 1px 5px 0; background: #efffff; border-right: 1px solid #cdd3d5; border-bottom: 1px solid #cdd3d5; white-space: nowrap; overflow: hidden; line-height: 16px; color: #2b2b2b; }
.grid td:nth-child(3) { padding-left: 10px; }
.grid td:nth-child(8) { border-right: 0; }
.grid td:first-child { padding: 0 0 0 6px; }
.grid td svg { width: 16px; height: 16px; }
.grid td a { color: #2a2ae0; text-decoration: underline; }
.grid tr.on td { background: linear-gradient(#fdf0c8 8%, #fdd2a5 8%, #fde8a2 84%, #fff 84%, #fff 92%, #f4cc4c 92%); }
.grid tr.on td:first-child { background: #fdf3e2; }
.c-icon { width: 26px; }
.c-100 { width: 100px; }
.c-name { width: 250px; }
.c-value { width: 375px; }

.desc { height: 87px; margin: 4px 7px 6px 6px; padding: 0 3px 4px 10px; border: 1px solid #dfe9f0; border-radius: 3px; min-width: 0; flex: none; color: #444; }
.desc legend { padding: 0 4px; margin-left: -6px; }
.desc-body { display: flex; height: 67px; }
.desc-text { flex: 1; overflow: hidden; line-height: 18px; padding-top: 4px; }
.desc-text b { display: block; color: #1c1c1c; }
.desc .vscroll { width: 17px; border: solid #bbb; border-width: 0 1px 0 2px; }

.zoombar { display: flex; justify-content: flex-end; align-items: stretch; height: 22px; background: #2a3854; padding-right: 11px; border-bottom: 1px solid #dfe9f5; flex: none; }
.zoombar .sq { width: 16px; margin-right: 3px; display: flex; align-items: center; justify-content: center; background: #d8dade; overflow: hidden; }
.zoombar .step { width: 11px; background: #d0d4dd; color: #26344f; font-weight: 700; }
.zoombar .zoom { width: 74px; margin: 1px; border: 1px solid #777; border-radius: 2px; text-align: center; line-height: 19px; color: #444; background: linear-gradient(90deg, #58bfdf 14px, #fff 14px); }

/* tag table dock */
.global { flex: none; margin: 4px 0 0 1px; background: #fff; }
.gsearch { display: flex; align-items: center; height: 20px; padding: 0 1px 0 4px; }
.gsearch .add { width: 20px; height: 19px; display: flex; justify-content: center; align-items: center; background: #e9e9e9; border: 1px solid #b5b5b5; margin-right: 6px; }
.gsearch input { align-self: stretch; border-left: 1px solid #b5b5b5; padding-left: 2px; }
.gtable { display: flex; height: 35px; overflow: hidden; align-items: flex-start; }
.gtable .vscroll { width: 18px; }
.gtable .vscroll button { height: 17px; }
.gtable th span { display: flex; align-items: center; gap: 1px; white-space: nowrap; }
.g-mark { width: 40px; }
.g-name { width: 149px; }
.g-power { width: 115px; }
.g-format { width: 91px; }
.g-retain { width: 63px; }

.docks { display: flex; height: 19px; background: #34486b; color: #e8edf5; margin-left: 1px; flex: none; }
.docks button { display: flex; align-items: center; gap: 6px; padding: 0 9px; white-space: nowrap; }
.docks .on { background: #f4f4f6; color: #1b87cf; }
```
